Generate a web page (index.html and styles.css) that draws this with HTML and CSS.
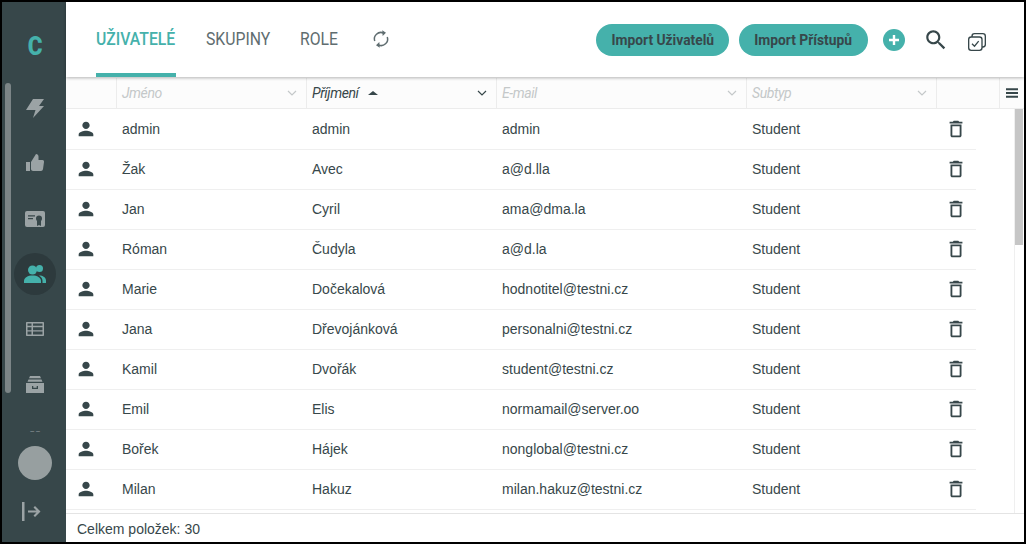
FILE: index.html
```html
<!DOCTYPE html>
<html lang="cs">
<head>
    <meta charset="UTF-8">
    <title>Uživatelé</title>
    <link rel="stylesheet" href="styles.css">
</head>
<body>
    <div class="app">
        <aside class="sidebar">
            <div class="logo">C</div>
            <nav class="nav">
                <div class="nav-scroll"></div>
                <a class="nav-item"><svg viewBox="0 0 24 24"><path d="M10 2h11l-5 7h5L10 21l2.500-8H3z"/></svg></a>
                <a class="nav-item"><svg viewBox="0 0 24 24"><path d="M3 10h4v9H3zM8 10l5-8c1.500 0 2.500 1 2.500 2.500V8h4c1 0 1.700.8 1.500 2l-1 7c-.2 1.200-1 2-2 2h-8c-1 0-2-1-2-2z"/></svg></a>
                <a class="nav-item"><svg viewBox="0 0 24 24"><rect x="2" y="4" width="20" height="16" rx="2"/><path class="ink" d="M5 8.300h7v1.300H5zM5 11h5v1.300H5zM14 14h4v5l-2-1-2 1z"/><circle class="ink" cx="16" cy="11.500" r="3"/></svg></a>
                <a class="nav-item active"><svg viewBox="0 0 24 24"><circle cx="9.500" cy="8" r="4.500"/><circle cx="16.500" cy="6.500" r="3.500"/><path d="M1 21v-2c0-3.500 4-5.500 8.500-5.500S18 15.500 18 19v2z"/><path d="M19.500 21H23v-2.500c0-3-3-5-7-5 2.500 1.500 3.500 3.500 3.500 5.500z"/></svg></a>
                <a class="nav-item"><svg viewBox="0 0 24 24"><path fill-rule="evenodd" d="M4 5h16c.6 0 1 .4 1 1v12c0 .6-.4 1-1 1H4c-.6 0-1-.4-1-1V6c0-.6.4-1 1-1zm.5 5.200v3h4v-3zm5.500 0v3h9.500v-3zm-5.500 4.400V17.500h4v-2.900zm5.500 0V17.500h9.500v-2.900zM4.500 6.500v2.300h4V6.500zm5.500 0v2.300h9.500V6.500z"/></svg></a>
                <a class="nav-item"><svg viewBox="0 0 24 24"><path d="M7 4h10l1 2.300H6zM5.500 7.500h13l1 2.300h-15z"/><path fill-rule="evenodd" d="M3 11h18v10H3zm6 3v3h6v-3h-1.300v1.700h-3.400V14z"/></svg></a>
                <div class="nav-more">– –</div>
            </nav>
            <div class="avatar"></div>
            <a class="logout"><svg viewBox="0 0 24 24"><path d="M0 2h2.500v19H0zM6 10.500h8.500l-3-3 1.500-1.500 5.500 5.500-5.500 5.500-1.500-1.500 3-3H6z"/></svg></a>
        </aside>
        <main class="main">
            <header class="topbar">
                <div class="tabs">
                    <a class="tab tab-users active"><span>UŽIVATELÉ</span></a>
                    <a class="tab tab-groups"><span>SKUPINY</span></a>
                    <a class="tab tab-roles"><span>ROLE</span></a>
                    <svg class="sync" viewBox="0 0 24 24"><path d="M4.500 14.500A7.800 7.800 0 0 1 15 4.800M19.500 9.500a7.800 7.800 0 0 1-10.500 9.700" fill="none" stroke="currentColor" stroke-width="1.800"/><path d="M13.500 1.500l4.500 3-4 4zM10.500 22.500l-4.500-3 4-4z"/></svg>
                </div>
                <div class="actions">
                    <button class="btn btn-users"><span>Import Uživatelů</span></button>
                    <button class="btn btn-access"><span>Import Přístupů</span></button>
                    <button class="add"><svg viewBox="0 0 22 22"><path d="M9.800 6h2.400v3.800H16v2.400h-3.800V16H9.800v-3.800H6V9.800h3.800z"/></svg></button>
                    <svg class="action-icon search" viewBox="0 0 24 24"><path d="M15.500 14h-.79l-.28-.27C15.410 12.590 16 11.110 16 9.500 16 5.910 13.090 3 9.500 3S3 5.910 3 9.500 5.910 16 9.500 16c1.610 0 3.090-.59 4.230-1.570l.27.28v.79l5 4.990L20.490 19l-4.990-5zm-6 0C7.010 14 5 11.990 5 9.500S7.010 5 9.500 5 14 7.010 14 9.500 11.990 14 9.500 14z"/></svg>
                    <svg class="action-icon copy" viewBox="0 0 24 24" fill="none" stroke="currentColor" stroke-width="1.600"><rect x="2" y="6" width="16" height="16" rx="3"/><path d="M6 6V5c0-1.700 1.300-3 3-3h10c1.700 0 3 1.300 3 3v10c0 1.700-1.300 3-3 3h-1"/><path d="M6 14l3 3 5-6"/></svg>
                </div>
            </header>

            <div class="table-head">
                <div class="th th-icon"></div>
                <div class="th filter">Jméno<svg class="chev" viewBox="0 0 12 12"><path d="M2 4l4 4 4-4"/></svg></div>
                <div class="th sorted">Příjmení<span class="sort"></span><svg class="chev" viewBox="0 0 12 12"><path d="M2 4l4 4 4-4"/></svg></div>
                <div class="th filter">E-mail<svg class="chev" viewBox="0 0 12 12"><path d="M2 4l4 4 4-4"/></svg></div>
                <div class="th filter">Subtyp<svg class="chev" viewBox="0 0 12 12"><path d="M2 4l4 4 4-4"/></svg></div>
                <div class="th th-del"></div>
                <div class="th th-menu"><svg viewBox="0 0 24 24"><path d="M3 19h18v-3H3zm0-5.500h18v-3H3zM3 5v3h18V5z"/></svg></div>
            </div>

            <div class="table-body">
                <div class="rows" id="rows"></div>
                <div class="scrollbar"><div class="thumb"></div></div>
            </div>

            <footer class="footer">Celkem položek: 30</footer>
        </main>
    </div>

    <script>
        const users = [
            ['admin', 'admin', 'admin'],
            ['Žak', 'Avec', 'a@d.lla'],
            ['Jan', 'Cyril', 'ama@dma.la'],
            ['Róman', 'Čudyla', 'a@d.la'],
            ['Marie', 'Dočekalová', 'hodnotitel@testni.cz'],
            ['Jana', 'Dřevojánková', 'personalni@testni.cz'],
            ['Kamil', 'Dvořák', 'student@testni.cz'],
            ['Emil', 'Elis', 'normamail@server.oo'],
            ['Bořek', 'Hájek', 'nonglobal@testni.cz'],
            ['Milan', 'Hakuz', 'milan.hakuz@testni.cz']
        ];
        const person = '<svg viewBox="0 0 24 24"><path d="M12 12c2.210 0 4-1.790 4-4s-1.790-4-4-4-4 1.790-4 4 1.790 4 4 4zm0 2c-2.670 0-8 1.340-8 4v2h16v-2c0-2.660-5.330-4-8-4z"/></svg>';
        const trash = '<svg viewBox="0 0 24 24"><path d="M6 19c0 1.100.9 2 2 2h8c1.100 0 2-.9 2-2V7H6v12zM8 9h8v10H8V9zm7.500-5l-1-1h-5l-1 1H5v2h14V4z"/></svg>';

        document.getElementById('rows').innerHTML = users.map(u => `
            <div class="row">
                <div class="cell cell-icon cell-person">${person}</div>
                <div class="cell">${u[0]}</div>
                <div class="cell">${u[1]}</div>
                <div class="cell">${u[2]}</div>
                <div class="cell">Student</div>
                <div class="cell cell-icon">${trash}</div>
            </div>`).join('');
    </script>
</body>
</html>
```

FILE: styles.css
```css
* {
    box-sizing: border-box;
}
html, body {
    margin: 0;
    height: 100%;
    overflow: hidden;
}
body {
    font-family: "Liberation Sans", Arial, sans-serif;
    font-size: 14px;
    color: #37474a;
    background: #fff;
}
.app {
    display: flex;
    height: 100%;
    border: 2px solid #000;
}

/* sidebar */
.sidebar {
    width: 64px;
    flex-shrink: 0;
    display: flex;
    flex-direction: column;
    align-items: center;
    padding-left: 2px;
    background: #37474a;
    color: #9ba3a5;
}
.logo {
    height: 76px;
    padding-top: 27px;
    font-family: Roboto, sans-serif;
    font-size: 25px;
    font-weight: 900;
    line-height: 36px;
    color: #45b1ab;
    transform: scaleX(.9);
}
.nav {
    position: relative;
    width: 100%;
    height: 356px;
    flex-shrink: 0;
    display: flex;
    flex-direction: column;
    align-items: center;
    overflow: hidden;
}
.nav-scroll {
    position: absolute;
    left: 1px;
    top: 5px;
    width: 6px;
    height: 310px;
    border-radius: 3px;
    background: #7c8587;
}
.nav-item {
    flex-shrink: 0;
    width: 42px;
    height: 42px;
    margin-top: 13px;
    border-radius: 50%;
    display: flex;
    align-items: center;
    justify-content: center;
}
.nav-item:first-of-type {
    margin-top: 10px;
}
.nav-item svg {
    width: 24px;
    height: 24px;
    fill: currentColor;
}
.nav-item .ink {
    fill: #37474a;
}
.nav-item.active {
    background: #2d3a3d;
    color: #45b1ab;
}
.nav-more {
    flex-shrink: 0;
    margin-top: 21px;
    font-size: 7px;
    line-height: 10px;
}
.avatar {
    width: 34px;
    height: 34px;
    margin-top: 12px;
    border-radius: 50%;
    background: #979fa0;
    flex-shrink: 0;
}
.logout {
    margin: 20px 2px 0 0;
    height: 24px;
}
.logout svg {
    display: block;
    width: 24px;
    height: 24px;
    fill: currentColor;
}

/* top bar */
.main {
    flex: 1;
    min-width: 0;
    display: flex;
    flex-direction: column;
}
.topbar {
    height: 75px;
    flex-shrink: 0;
    display: flex;
    justify-content: space-between;
    padding: 0 37px 0 30px;
    box-shadow: 0 1px 3px rgba(0,0,0,.3);
    position: relative;
}
.tabs {
    display: flex;
    gap: 30px;
}
.tab {
    height: 75px;
    padding-top: 26px;
    border-bottom: 4px solid transparent;
    font-family: Roboto, sans-serif;
    font-size: 18px;
    line-height: 22px;
    color: #5f6d70;
    white-space: nowrap;
}
.tab-users { width: 80px; }
.tab-groups { width: 64px; }
.tab-roles { width: 38px; }
/* no Roboto Condensed here, so narrow the regular cut */
.tab span {
    display: inline-block;
    transform: scaleX(.875);
    transform-origin: left;
}
.tab.active {
    border-bottom-color: #45b1ab;
    color: #45b1ab;
    font-weight: 500;
}
.sync {
    width: 20px;
    height: 20px;
    margin: 27px 0 0 3px;
    fill: #5f6d70;
    color: #5f6d70;
}
.actions {
    display: flex;
    align-items: flex-start;
    padding-top: 22px;
}
.btn {
    height: 32px;
    padding: 0;
    margin-right: 10px;
    border: none;
    border-radius: 16px;
    background: #45b1ab;
    color: #37474a;
    font-family: Roboto, sans-serif;
    font-size: 15px;
    font-weight: 700;
    white-space: nowrap;
}
.btn span {
    display: inline-block;
    transform: scaleX(.92);
}
.btn-users { width: 133px; }
.btn-access { width: 129px; }
.add {
    width: 22px;
    height: 22px;
    margin: 5px 0 0 5px;
    padding: 0;
    border: none;
    border-radius: 50%;
    background: #45b1ab;
}
.add svg {
    display: block;
    width: 22px;
    height: 22px;
    fill: #fff;
}
.action-icon {
    fill: #37474a;
    color: #37474a;
}
.search {
    width: 26px;
    height: 26px;
    margin: 3px 0 0 18px;
}
.copy {
    width: 20px;
    height: 20px;
    margin: 8px 0 0 18px;
    fill: none;
}

/* table */
.table-head {
    height: 31px;
    margin-top: 1px;
    flex-shrink: 0;
    display: grid;
    grid-template-columns: 50px 190px 190px 250px 190px 63px 1fr;
    border-bottom: 1px solid #ececec;
    background: #fcfcfc;
}
.th {
    display: flex;
    align-items: center;
    padding: 0 6px 0 5px;
    border-left: 1px solid #ececec;
    font-family: Roboto, sans-serif;
    font-size: 14px;
    font-style: italic;
    letter-spacing: -.4px;
    color: #37474a;
}
.th-icon {
    border-left: none;
}
.th.filter {
    color: #c4c8c9;
}
.th-menu {
    justify-content: center;
    padding: 0;
}
.th-menu svg {
    width: 16px;
    height: 16px;
    fill: #37474a;
}
.sort {
    width: 0;
    height: 0;
    margin-left: 9px;
    border-style: solid;
    border-color: transparent;
    border-width: 0 5px 4px;
    border-bottom-color: #37474a;
}
.chev {
    width: 12px;
    height: 12px;
    margin-left: auto;
    margin-right: 2px;
    fill: none;
    stroke: #c4c8c9;
    stroke-width: 1.200;
}
.sorted .chev {
    stroke: #37474a;
}
.table-body {
    flex: 1;
    min-height: 0;
    display: flex;
    justify-content: space-between;
    overflow: hidden;
}
.rows {
    width: 910px;
    padding-top: 1px;
    overflow: hidden;
}
.row {
    height: 40px;
    display: grid;
    grid-template-columns: 50px 190px 190px 250px 190px 40px;
    border-bottom: 1px solid #efefef;
}
.cell {
    display: flex;
    align-items: center;
    padding: 0 6px 1px;
}
.cell-icon {
    justify-content: center;
    padding: 0 0 1px;
}
.cell-person {
    padding-right: 10px;
}
.cell-icon svg {
    width: 22px;
    height: 22px;
    fill: #37474a;
}
.scrollbar {
    width: 9px;
    margin-right: 1px;
    border-left: 1px solid #efefef;
}
.thumb {
    height: 136px;
    background: #c6c6c6;
}
.footer {
    height: 29px;
    flex-shrink: 0;
    padding: 1px 11px 0;
    line-height: 29px;
    border-top: 1px solid #e4e4e4;
}
```
